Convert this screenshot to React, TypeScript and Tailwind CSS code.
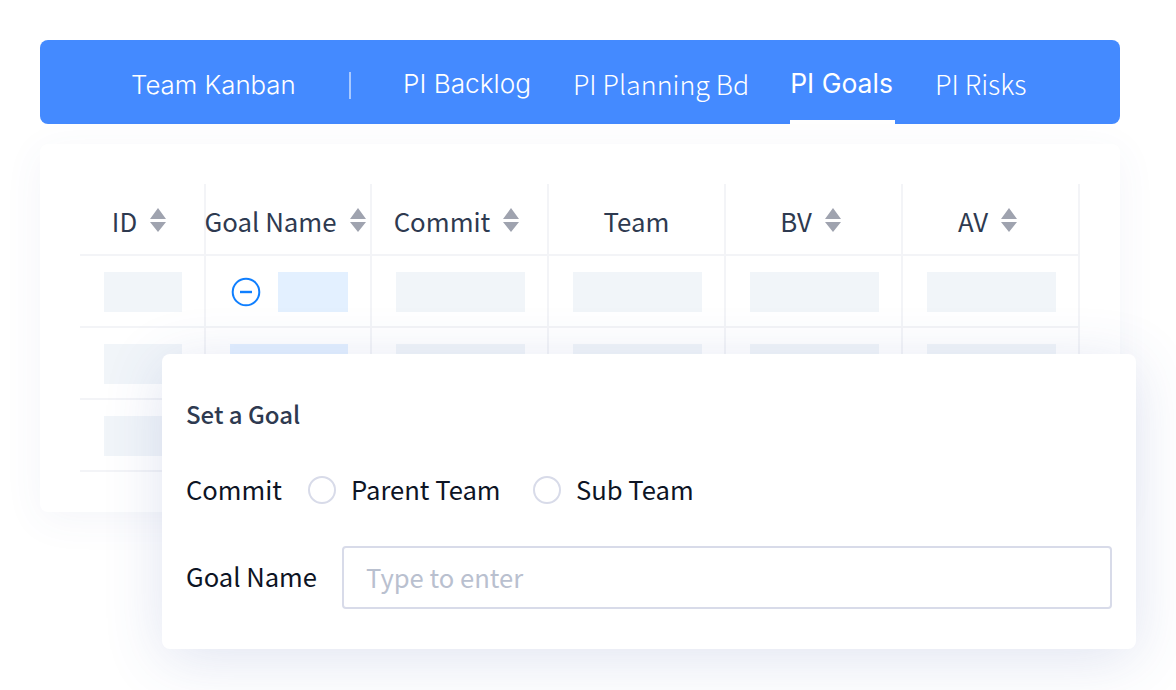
const cjk = "font-['Noto_Sans_CJK_SC','Noto_Sans',sans-serif]";

function Sort() {
  return (
    <svg width="16" height="24" viewBox="0 0 16 24" className="mr-[6px] mt-[2px] shrink-0">
      <path d="M8 0 L16 11 H0 Z M0 14 H16 L8 24 Z" fill="#9fa3af" />
    </svg>
  );
}

const cols = [
  { label: "ID", sort: true },
  { label: "Goal Name", sort: true },
  { label: "Commit", sort: true },
  { label: "Team", sort: false },
  { label: "BV", sort: true },
  { label: "AV", sort: true },
];

function Cell({ children }: { children?: React.ReactNode }) {
  return (
    <div className="flex h-[72px] items-center border-r-2 border-b-2 border-[#f3f4f7] pl-6 pr-[22px] pt-[2px]">
      {children}
    </div>
  );
}

const grey = "h-10 w-full bg-[#f1f5f9]";

export default function App() {
  return (
    <div className={`relative h-[690px] w-[1176px] overflow-hidden bg-white pl-10 pt-10 ${cjk}`}>
      <nav className="flex h-[84px] w-[1080px] items-stretch rounded-lg bg-[#448aff] pl-[91px] text-white">
        <div className="flex w-[218px] items-center pt-[6px] text-[25.8px] font-light font-['Inter',sans-serif]">Team Kanban</div>
        <div className="flex items-center pt-[7px]"><div className="h-[27px] w-[2px] bg-[#a9c9ff]" /></div>
        <div className="ml-[52px] flex items-center pt-1 text-[26.2px] font-light font-['Inter',sans-serif]">PI Backlog</div>
        <div className="ml-[42px] flex items-center pt-1 text-[26.8px] font-light">PI Planning Bd</div>
        <div className="ml-[41px] flex items-center border-b-4 border-white pr-[2px] pt-2 text-[26.5px] font-normal font-['Inter',sans-serif]">PI Goals</div>
        <div className="ml-[40px] flex items-center pt-1 text-[27px] font-light">PI Risks</div>
      </nav>

      <div className="mt-5 h-[368px] w-[1080px] rounded-lg bg-white p-10 shadow-[0_8px_40px_rgba(60,90,160,0.06)]">
        <div className="grid grid-cols-[126px_166px_177px_177px_177px_177px] text-[25.8px] text-[#2e3a50]">
          {cols.map((c) => (
            <div key={c.label} className="flex h-[72px] items-center justify-center gap-[13px] border-r-2 border-b-2 border-[#f3f4f7]">
              <span className="whitespace-nowrap pt-1">{c.label}</span>
              {c.sort && <Sort />}
            </div>
          ))}

          <Cell><div className={grey} /></Cell>
          <Cell>
            <div className="flex w-full items-center justify-end gap-[17px]">
              <svg width="30" height="30" viewBox="0 0 30 30" className="shrink-0">
                <circle cx="15" cy="15" r="13.3" fill="none" stroke="#0f7fff" strokeWidth="2" />
                <path d="M9 15 H21" stroke="#0f7fff" strokeWidth="2.4" />
              </svg>
              <div className="h-10 w-[70px] bg-[#e3f0ff]" />
            </div>
          </Cell>
          {[0, 1, 2, 3].map((i) => <Cell key={i}><div className={grey} /></Cell>)}

          <Cell><div className={grey} /></Cell>
          <Cell><div className="h-10 w-full bg-[#e3f0ff]" /></Cell>
          {[0, 1, 2, 3].map((i) => <Cell key={i}><div className={grey} /></Cell>)}

          <Cell><div className={grey} /></Cell>
          <Cell />
          {[0, 1, 2, 3].map((i) => <Cell key={i} />)}
        </div>
      </div>

      <div className="absolute left-[162px] top-[354px] h-[295px] w-[974px] rounded-lg bg-white pl-6 pr-6 shadow-[0_10px_60px_rgba(60,90,170,0.16)]">
        <div className="mt-[44px] text-[24px] leading-[32px] font-medium text-[#2e3a50]">Set a Goal</div>
        <div className="mt-[44px] flex h-[32px] items-center text-[25.6px] text-[#0d1424]">
          <span className="w-[122px] pb-[2px]">Commit</span>
          <span className="size-7 rounded-full border-2 border-[#d8dbe9]" />
          <span className="ml-[15px] w-[182px] pb-[2px]">Parent Team</span>
          <span className="size-7 rounded-full border-2 border-[#d8dbe9]" />
          <span className="ml-[15px] pb-[2px]">Sub Team</span>
        </div>
        <div className="mt-[40px] flex items-center text-[25.6px] text-[#0d1424]">
          <span className="w-[156px] pb-[2px]">Goal Name</span>
          <input
            readOnly
            placeholder="Type to enter"
            className="h-[63px] w-[770px] rounded border-2 border-[#d8dbe9] bg-white px-[22px] pb-[3px] text-[25.6px] outline-none placeholder:text-[#b9c0cf]"
          />
        </div>
      </div>
    </div>
  );
}
